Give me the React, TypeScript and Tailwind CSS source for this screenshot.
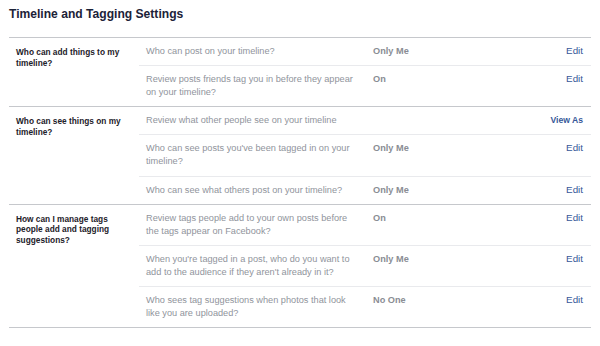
import React from "react";

type Row = {
  text: string;
  value?: string;
  action: string;
  bold?: boolean;
};

type Section = {
  label: string;
  rows: Row[];
};

const sections: Section[] = [
  {
    label: "Who can add things to my timeline?",
    rows: [
      { text: "Who can post on your timeline?", value: "Only Me", action: "Edit" },
      {
        text: "Review posts friends tag you in before they appear on your timeline?",
        value: "On",
        action: "Edit",
      },
    ],
  },
  {
    label: "Who can see things on my timeline?",
    rows: [
      { text: "Review what other people see on your timeline", action: "View As", bold: true },
      {
        text: "Who can see posts you've been tagged in on your timeline?",
        value: "Only Me",
        action: "Edit",
      },
      { text: "Who can see what others post on your timeline?", value: "Only Me", action: "Edit" },
    ],
  },
  {
    label: "How can I manage tags people add and tagging suggestions?",
    rows: [
      {
        text: "Review tags people add to your own posts before the tags appear on Facebook?",
        value: "On",
        action: "Edit",
      },
      {
        text: "When you're tagged in a post, who do you want to add to the audience if they aren't already in it?",
        value: "Only Me",
        action: "Edit",
      },
      {
        text: "Who sees tag suggestions when photos that look like you are uploaded?",
        value: "No One",
        action: "Edit",
      },
    ],
  },
];

export default function App() {
  return (
    <div
      className="w-[600px] h-[346px] bg-white overflow-hidden"
      style={{ fontFamily: '"Liberation Sans", Arial, sans-serif' }}
    >
      <h1 className="pl-[9px] pt-[7px] text-[12.1px] leading-[14px] font-bold text-[#1c2238]">
        Timeline and Tagging Settings
      </h1>

      <div className="ml-[9px] mt-[16px] w-[582px] border-b border-[#c6c8cc]">
        {sections.map((section, i) => (
          <div key={i} className="flex border-t border-[#c6c8cc]">
            <div className="w-[130px] shrink-0 pl-[7px] pr-[13px] pt-[9px] text-[8.3px] leading-[10.5px] font-bold text-[#1d2129]">
              {section.label}
            </div>
            <div className="flex-1">
              {section.rows.map((row, j) => (
                <div
                  key={j}
                  className={
                    j > 0
                      ? "flex items-baseline py-[7px] border-t border-[#e9eaed] text-[9.2px] leading-[13.1px]"
                      : "flex items-baseline py-[7px] text-[9.2px] leading-[13.1px]"
                  }
                >
                  <div className="w-[234px] shrink-0 pl-[7px] pr-[16px] text-[#90949c]">
                    {row.text}
                  </div>
                  <div className="flex-1 font-bold text-[#8a8d94] leading-[10px]">{row.value}</div>
                  <div
                    className={
                      row.bold
                        ? "pr-[8px] text-right text-[8.6px] leading-[10px] font-bold text-[#365899]"
                        : "pr-[8px] text-right text-[9.8px] leading-[10px] text-[#365899]"
                    }
                  >
                    {row.action}
                  </div>
                </div>
              ))}
            </div>
          </div>
        ))}
      </div>
    </div>
  );
}
